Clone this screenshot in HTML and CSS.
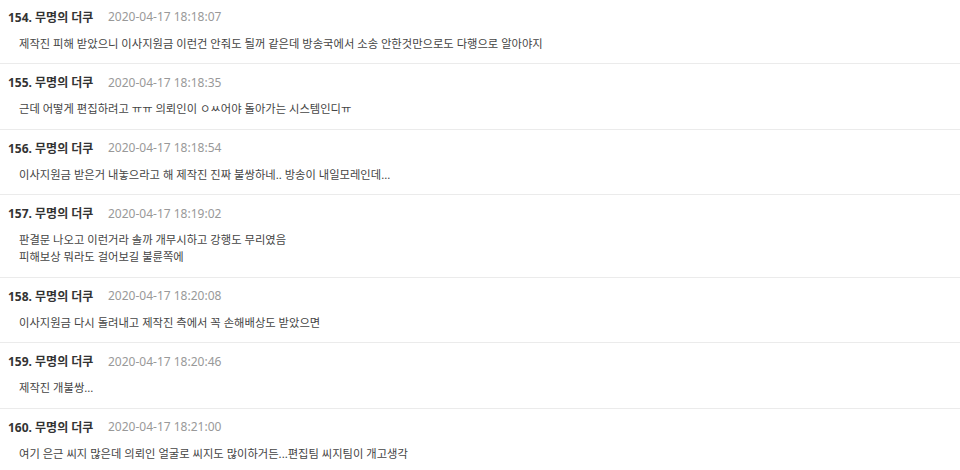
FILE: index.html
```html
<!DOCTYPE html>
<html lang="ko">
<head>
<meta charset="utf-8">
<link rel="stylesheet" href="styles.css">
</head>
<body>
<ul class="comments">
  <li class="comment">
    <div class="meta"><span class="author">154. 무명의 더쿠</span><span class="date">2020-04-17 18:18:07</span></div>
    <div class="text">제작진 피해 받았으니 이사지원금 이런건 안줘도 될꺼 같은데 방송국에서 소송 안한것만으로도 다행으로 알아야지</div>
  </li>
  <li class="comment">
    <div class="meta"><span class="author">155. 무명의 더쿠</span><span class="date">2020-04-17 18:18:35</span></div>
    <div class="text">근데 어떻게 편집하려고 ㅠㅠ 의뢰인이 ㅇㅆ어야 돌아가는 시스템인디ㅠ</div>
  </li>
  <li class="comment">
    <div class="meta"><span class="author">156. 무명의 더쿠</span><span class="date">2020-04-17 18:18:54</span></div>
    <div class="text">이사지원금 받은거 내놓으라고 해 제작진 진짜 불쌍하네.. 방송이 내일모레인데...</div>
  </li>
  <li class="comment">
    <div class="meta"><span class="author">157. 무명의 더쿠</span><span class="date">2020-04-17 18:19:02</span></div>
    <div class="text">판결문 나오고 이런거라 솔까 개무시하고 강행도 무리였음<br>피해보상 뭐라도 걸어보길 불륜쪽에</div>
  </li>
  <li class="comment">
    <div class="meta"><span class="author">158. 무명의 더쿠</span><span class="date">2020-04-17 18:20:08</span></div>
    <div class="text">이사지원금 다시 돌려내고 제작진 측에서 꼭 손해배상도 받았으면</div>
  </li>
  <li class="comment">
    <div class="meta"><span class="author">159. 무명의 더쿠</span><span class="date">2020-04-17 18:20:46</span></div>
    <div class="text">제작진 개불쌍...</div>
  </li>
  <li class="comment">
    <div class="meta"><span class="author">160. 무명의 더쿠</span><span class="date">2020-04-17 18:21:00</span></div>
    <div class="text">여기 은근 씨지 많은데 의뢰인 얼굴로 씨지도 많이하거든...편집팀 씨지팀이 개고생각</div>
  </li>
</ul>
</body>
</html>
```
FILE: styles.css
```css
html, body {
  margin: 0;
  padding: 0;
  background: #fff;
}
body {
  font-family: "Noto Sans", "Noto Sans CJK KR", sans-serif;
  color: #333;
  overflow: hidden;
}
.comments {
  list-style: none;
  margin: -1.5px 0 0 0;
  padding: 0;
}
.comment {
  padding: 8px 0 11.5px 0;
  border-bottom: 1px solid #ebebeb;
}
.meta {
  display: flex;
  align-items: center;
  height: 20px;
  padding-left: 8px;
}
.author {
  font-size: 12px;
  font-weight: 700;
  color: #333;
  width: 100px;
}
.date {
  font-size: 12px;
  color: #999;
}
.text {
  margin-top: 8px;
  padding-left: 19px;
  font-size: 11.3px;
  line-height: 17px;
  color: #444;
}
```
